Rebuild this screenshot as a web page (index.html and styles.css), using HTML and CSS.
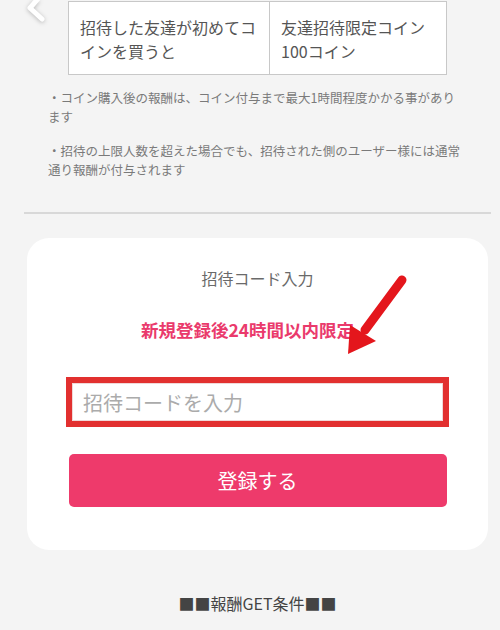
FILE: index.html
```html
<!DOCTYPE html>
<html lang="ja">
<head>
<meta charset="utf-8">
<title>招待コード入力</title>
<link rel="stylesheet" href="styles.css">
</head>
<body>
<svg class="back" width="30" height="30" viewBox="0 0 30 30" aria-hidden="true">
  <polyline points="16,-6 4,8 16,19" fill="none" stroke="#ffffff" stroke-width="5" stroke-linecap="round" stroke-linejoin="round"/>
</svg>
<main class="page">
  <table class="reward-table">
    <tr>
      <td class="col-a">招待した友達が初めてコインを買うと</td>
      <td class="col-b">友達招待限定コイン100コイン</td>
    </tr>
  </table>
  <div class="notes">
    <p>・コイン購入後の報酬は、コイン付与まで最大1時間程度かかる事があります</p>
    <p>・招待の上限人数を超えた場合でも、招待された側のユーザー様には通常通り報酬が付与されます</p>
  </div>
  <div class="rule"></div>
  <section class="card">
    <h2 class="card-title">招待コード入力</h2>
    <p class="limit">新規登録後24時間以内限定</p>
    <div class="highlight">
      <input class="code-input" type="text" placeholder="招待コードを入力">
    </div>
    <button class="submit" type="button">登録する</button>
  </section>
  <h3 class="footer-title">■■報酬GET条件■■</h3>
</main>
<svg class="arrow" width="70" height="90" viewBox="0 0 70 90" aria-hidden="true">
  <line x1="62" y1="10" x2="25" y2="60" stroke="#e4161c" stroke-width="9" stroke-linecap="round"/>
  <polygon points="8,84 10,55 36,71" fill="#e4161c"/>
</svg>
</body>
</html>
```
FILE: styles.css
```css
html, body {
  margin: 0;
  padding: 0;
}
body {
  background: #f4f4f4;
  font-family: "Noto Sans CJK JP", "Noto Sans", sans-serif;
  color: #555;
  position: relative;
  height: 630px;
  overflow: hidden;
}
.back {
  position: absolute;
  left: 26px;
  top: 0;
  filter: drop-shadow(0 1px 2px rgba(0,0,0,0.25));
}
.page {
  margin-left: 24px;
  width: 467px;
  padding-top: 1px;
  display: flex;
  flex-direction: column;
  align-items: center;
}
.reward-table {
  border-collapse: collapse;
  width: 378px;
  table-layout: fixed;
  background: #fff;
  font-size: 16px;
  line-height: 24px;
  color: #555;
}
.reward-table td {
  border: 1px solid #c8c8c8;
  padding: 13px 11px 11px;
  vertical-align: top;
}
.col-a { width: 201px; box-sizing: border-box; }
.col-b { width: 177px; box-sizing: border-box; }
.notes {
  align-self: flex-start;
  margin-left: 24px;
  width: 415px;
  margin-top: 13px;
  font-size: 12.5px;
  line-height: 19px;
  color: #7a7a7a;
}
.notes p {
  margin: 0;
}
.notes p + p {
  margin-top: 15px;
}
.rule {
  align-self: stretch;
  height: 2px;
  background: #d8d8d8;
  margin-top: 33px;
}
.card {
  width: 461px;
  box-sizing: border-box;
  margin-top: 24px;
  background: #fff;
  border-radius: 22px;
  padding: 28px 0 43px;
  display: flex;
  flex-direction: column;
  align-items: center;
}
.card-title {
  margin: 0;
  font-size: 16px;
  line-height: 24px;
  font-weight: 400;
  color: #6a6a6a;
}
.limit {
  margin: 27px 20px 0 0;
  font-size: 17.5px;
  line-height: 26px;
  font-weight: 700;
  color: #ea3a6c;
}
.highlight {
  margin-top: 34px;
  width: 383px;
  box-sizing: border-box;
  border: 6px solid #e2302f;
  background: #fff;
}
.code-input {
  display: block;
  width: 100%;
  box-sizing: border-box;
  height: 38px;
  border: 1px solid #f0d8d8;
  padding: 0 10px;
  font-family: "Noto Sans CJK JP", "Noto Sans", sans-serif;
  font-size: 20px;
  color: #555;
  outline: none;
  background: #fff;
}
.code-input::placeholder {
  color: #ababab;
}
.submit {
  margin-top: 27px;
  width: 378px;
  height: 53px;
  border: none;
  border-radius: 5px;
  background: #ee3a6b;
  color: #fff;
  font-family: "Noto Sans CJK JP", "Noto Sans", sans-serif;
  font-size: 20px;
  padding: 0;
}
.footer-title {
  margin: 41px 0 0;
  font-size: 16px;
  line-height: 24px;
  font-weight: 400;
  color: #444;
}
.arrow {
  position: absolute;
  left: 340px;
  top: 270px;
}
```
